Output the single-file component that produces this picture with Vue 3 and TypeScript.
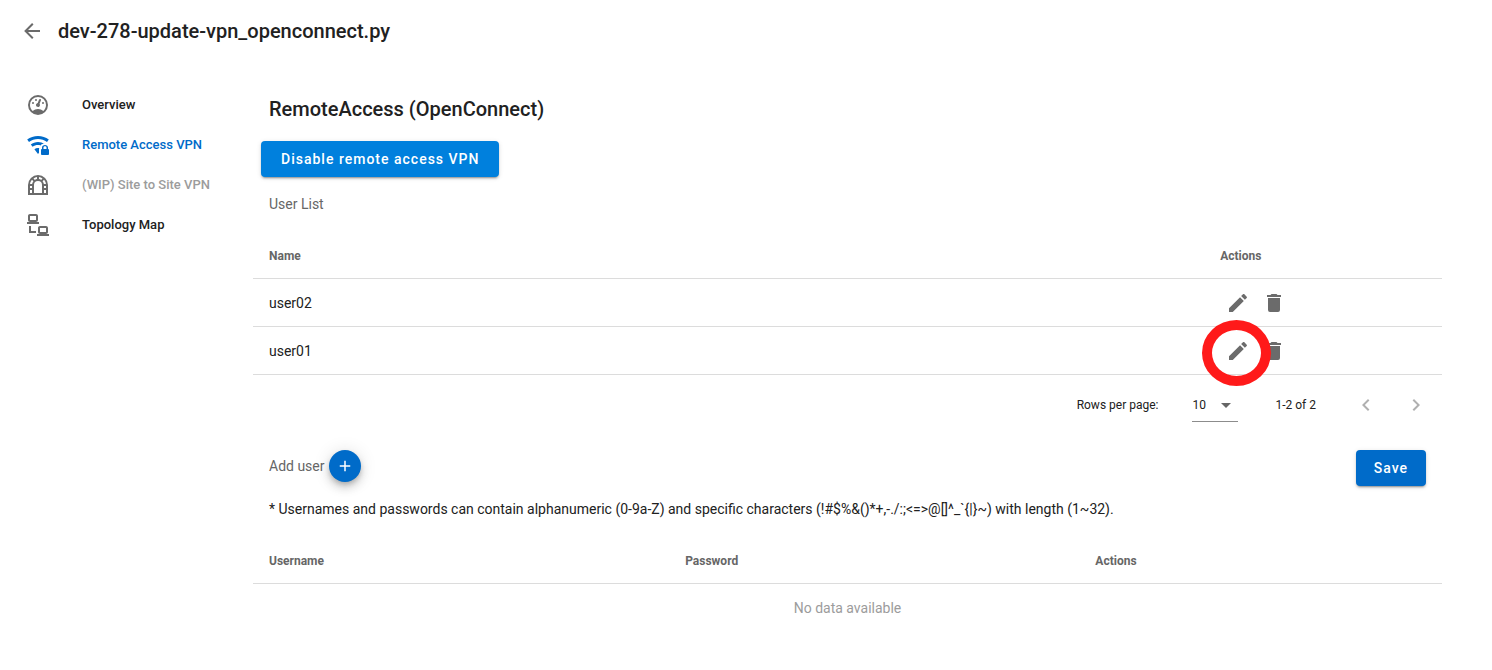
<script setup lang="ts">
import { ref } from 'vue'

interface NavItem {
  label: string
  icon: string
  state: '' | 'active' | 'disabled'
}

const icons: Record<string, string> = {
  back: 'M20,11V13H8L13.5,18.5L12.08,19.92L4.16,12L12.08,4.08L13.5,5.5L8,11H20Z',
  gauge:
    'M12,2A10,10 0 0,0 2,12A10,10 0 0,0 12,22A10,10 0 0,0 22,12A10,10 0 0,0 12,2M12,4A8,8 0 0,1 20,12C20,14.4 19,16.5 17.3,18C15.9,16.7 14,16 12,16C10,16 8.2,16.7 6.7,18C5,16.5 4,14.4 4,12A8,8 0 0,1 12,4M14,5.89C13.62,5.9 13.26,6.15 13.1,6.54L11.81,9.77L11.71,10C11,10.13 10.41,10.6 10.14,11.26C9.73,12.29 10.23,13.45 11.26,13.86C12.29,14.27 13.45,13.77 13.86,12.74C14.12,12.08 14,11.32 13.57,10.76L13.67,10.5L14.96,7.29L14.97,7.26C15.17,6.75 14.92,6.17 14.41,5.96C14.28,5.91 14.15,5.89 14,5.89M10,6A1,1 0 0,0 9,7A1,1 0 0,0 10,8A1,1 0 0,0 11,7A1,1 0 0,0 10,6M7,9A1,1 0 0,0 6,10A1,1 0 0,0 7,11A1,1 0 0,0 8,10A1,1 0 0,0 7,9M17,9A1,1 0 0,0 16,10A1,1 0 0,0 17,11A1,1 0 0,0 18,10A1,1 0 0,0 17,9Z',
  wifi: 'M12,3C7.95,3 4.21,4.34 1.2,6.6L3,9C5.5,7.12 8.62,6 12,6C15.38,6 18.5,7.12 21,9L22.8,6.6C19.79,4.34 16.05,3 12,3M12,9C9.3,9 6.81,9.89 4.8,11.4L6.6,13.8C8.1,12.67 9.97,12 12,12C12.9,12 13.8,12.13 14.6,12.38C15.4,11 16.9,10.1 18.6,10.97C16.6,9.7 14.4,9 12,9M12,15C10.65,15 9.4,15.45 8.4,16.2L12,21L13,19.67V16C13,15.7 13.1,15.4 13.3,15.15C12.9,15.05 12.4,15 12,15M22,16V14.5C22,13.1 20.7,12 19,12C17.3,12 16,13.1 16,14.5V16C15.5,16 15,16.5 15,17V21C15,21.5 15.5,22 16,22H22C22.5,22 23,21.5 23,21V17C23,16.5 22.5,16 22,16M20.5,16H17.5V14.5C17.5,13.7 18.2,13.2 19,13.2C19.8,13.2 20.5,13.7 20.5,14.5Z',
  tunnel:
    'M12,2A10,10 0 0,0 2,12V22H22V12A10,10 0 0,0 12,2M11,4.07V6.1C10.2,6.24 9.5,6.53 8.86,6.93L7.5,5.4C8.5,4.7 9.7,4.2 11,4.07M13,4.07C14.3,4.2 15.5,4.7 16.5,5.4L15.14,6.93C14.5,6.53 13.8,6.24 13,6.1V4.07M6,6.7L7.4,8.2C6.8,8.9 6.36,9.9 6.1,11H4.07C4.2,9.3 4.9,7.9 6,6.7M18,6.7C19.1,7.9 19.8,9.3 19.93,11H17.9C17.64,9.9 17.2,8.9 16.6,8.2L18,6.7M12,8A4,4 0 0,1 16,12V20H8V12A4,4 0 0,1 12,8M4,13H6V15H4V13M18,13H20V15H18V13M4,17H6V20H4V17M18,17H20V20H18V17Z',
  lan: 'M4,1C2.89,1 2,1.89 2,3V7C2,8.11 2.89,9 4,9H1V11H13V9H10C11.11,9 12,8.11 12,7V3C12,1.89 11.11,1 10,1H4M4,3H10V7H4V3M3,13V20H10V18H5V13H3M14,13C12.89,13 12,13.89 12,15V19C12,20.11 12.89,21 14,21H11V23H23V21H20C21.11,21 22,20.11 22,19V15C22,13.89 21.11,13 20,13H14M14,15H20V19H14V15Z',
  pencil:
    'M20.71,7.04C21.1,6.65 21.1,6 20.71,5.63L18.37,3.29C18,2.9 17.35,2.9 16.96,3.29L15.12,5.12L18.87,8.87M3,17.25V21H6.75L17.81,9.93L14.06,6.18L3,17.25Z',
  trash: 'M19,4H15.5L14.5,3H9.5L8.5,4H5V6H19M6,19A2,2 0 0,0 8,21H16A2,2 0 0,0 18,19V7H6V19Z',
  left: 'M15.41,16.58L10.83,12L15.41,7.41L14,6L8,12L14,18L15.41,16.58Z',
  right: 'M8.59,16.58L13.17,12L8.59,7.41L10,6L16,12L10,18L8.59,16.58Z',
  down: 'M7,10L12,15L17,10H7Z',
  plus: 'M19,13H13V19H11V13H5V11H11V5H13V11H19V13Z',
}

const nav: NavItem[] = [
  { label: 'Overview', icon: 'gauge', state: '' },
  { label: 'Remote Access VPN', icon: 'wifi', state: 'active' },
  { label: '(WIP) Site to Site VPN', icon: 'tunnel', state: 'disabled' },
  { label: 'Topology Map', icon: 'lan', state: '' },
]

const users = ref<string[]>(['user02', 'user01'])
const marked = 'user01'
const perPage = ref(10)
</script>

<template>
  <div class="page">
    <header class="top">
      <button class="icon-btn" type="button" aria-label="Back">
        <svg class="icon" viewBox="0 0 24 24"><path :d="icons.back" /></svg>
      </button>
      <h1>dev-278-update-vpn_openconnect.py</h1>
    </header>

    <div class="body">
      <nav class="side">
        <a v-for="item in nav" :key="item.label" href="#" class="nav-item" :class="item.state">
          <svg class="icon" viewBox="0 0 24 24"><path fill-rule="evenodd" :d="icons[item.icon]" /></svg>
          <span>{{ item.label }}</span>
        </a>
      </nav>

      <main class="main">
        <h2>RemoteAccess (OpenConnect)</h2>
        <button class="btn disable" type="button">Disable remote access VPN</button>
        <p class="sub">User List</p>

        <table class="users">
          <thead>
            <tr><th class="c-name">Name</th><th>Actions</th></tr>
          </thead>
          <tbody>
            <tr v-for="user in users" :key="user">
              <td>{{ user }}</td>
              <td>
                <div class="actions">
                  <button class="icon-btn edit" type="button" :aria-label="`Edit ${user}`">
                    <svg class="icon" viewBox="0 0 24 24"><path :d="icons.pencil" /></svg>
                    <span v-if="user === marked" class="ring"></span>
                  </button>
                  <button class="icon-btn" type="button" :aria-label="`Delete ${user}`">
                    <svg class="icon" viewBox="0 0 24 24"><path :d="icons.trash" /></svg>
                  </button>
                </div>
              </td>
            </tr>
          </tbody>
        </table>

        <div class="pager">
          <label for="per-page">Rows per page:</label>
          <div class="select">
            <select id="per-page" v-model="perPage">
              <option :value="10">10</option>
              <option :value="25">25</option>
            </select>
            <svg class="icon caret" viewBox="0 0 24 24"><path :d="icons.down" /></svg>
          </div>
          <span>1-2 of 2</span>
          <button class="icon-btn prev" type="button" disabled aria-label="Previous page">
            <svg class="icon" viewBox="0 0 24 24"><path :d="icons.left" /></svg>
          </button>
          <button class="icon-btn next" type="button" disabled aria-label="Next page">
            <svg class="icon" viewBox="0 0 24 24"><path :d="icons.right" /></svg>
          </button>
        </div>

        <div class="add">
          <span id="add-label" class="add-label">Add user</span>
          <button class="fab" type="button" aria-labelledby="add-label">
            <svg viewBox="0 0 24 24"><path :d="icons.plus" /></svg>
          </button>
          <button class="btn save" type="button">Save</button>
        </div>

        <p class="note">* Usernames and passwords can contain alphanumeric (0-9a-Z) and specific characters (!#$%&amp;()*+,-./:;&lt;=&gt;@[]^_`{|}~) with length (1~32).</p>

        <table class="new-users">
          <thead>
            <tr><th class="c-user">Username</th><th class="c-pass">Password</th><th>Actions</th></tr>
          </thead>
          <tbody>
            <tr><td colspan="3" class="empty">No data available</td></tr>
          </tbody>
        </table>
      </main>
    </div>
  </div>
</template>

<style>
body {
  margin: 0;
  background: #fff;
}
</style>

<style scoped>
.page {
  font-family: Roboto, sans-serif;
  font-size: 14px;
  line-height: 20px;
  color: #212121;
}
button {
  font: inherit;
  border: 0;
  padding: 0;
  cursor: pointer;
}
.icon {
  display: block;
  flex: none;
  width: 24px;
  height: 24px;
  fill: currentColor;
}
.icon-btn {
  display: block;
  background: none;
  color: #6b6b6b;
}
.icon-btn:disabled {
  color: #b0b0b0;
}
.top {
  display: flex;
  align-items: center;
  gap: 14px;
  height: 62px;
  padding: 0 20px;
}
h1,
h2 {
  margin: 0;
  font-size: 20px;
  font-weight: 500;
  line-height: 32px;
}
.body {
  display: flex;
  padding: 23px 50px 0 10px;
}
.side {
  flex: none;
  width: 243px;
}
.nav-item {
  display: flex;
  align-items: center;
  gap: 32px;
  height: 40px;
  padding-left: 16px;
  font-size: 13px;
  font-weight: 500;
  color: #212121;
  text-decoration: none;
}
.nav-item .icon {
  color: #6b6b6b;
}
.nav-item.active,
.nav-item.active .icon {
  color: #006bc9;
}
.nav-item.disabled {
  color: #9c9c9c;
}
.main {
  flex: 1;
  min-width: 0;
}
h2 {
  padding: 8px 16px 0;
}
.btn {
  height: 36px;
  border-radius: 4px;
  background: #006bc9;
  color: #fff;
  font-weight: 500;
  letter-spacing: 1px;
  padding: 0 18px;
  box-shadow: 0 3px 1px -2px rgba(0, 0, 0, 0.2), 0 2px 2px rgba(0, 0, 0, 0.14), 0 1px 5px rgba(0, 0, 0, 0.12);
}
.disable {
  display: block;
  margin: 16px 8px 0;
  padding: 0 20px;
  background: #0080dd;
}
.sub {
  margin: 17px 16px 0;
  color: #666;
}
table {
  width: 100%;
  border-spacing: 0;
  table-layout: fixed;
}
th,
td {
  box-sizing: border-box;
  height: 48px;
  padding: 0 16px;
}
th {
  padding-top: 2px;
  text-align: left;
  font-size: 12px;
  font-weight: 700;
  color: #666;
  border-bottom: 1px solid #dcdcdc;
}
.users {
  margin-top: 17px;
}
.users td {
  border-bottom: 1px solid #dcdcdc;
}
.c-name {
  width: 80%;
}
.actions {
  display: flex;
  gap: 12px;
  padding-left: 6px;
}
.edit {
  position: relative;
}
.ring {
  position: absolute;
  top: -19px;
  left: -24px;
  width: 49px;
  height: 46px;
  border: 10px solid #ff1a1a;
  border-radius: 50%;
}
.pager {
  display: flex;
  align-items: center;
  justify-content: flex-end;
  height: 60px;
  padding-right: 14px;
  font-size: 12px;
}
.select {
  position: relative;
  margin: 0 37px 0 34px;
  border-bottom: 1px solid #8c8c8c;
}
select {
  display: block;
  appearance: none;
  width: 46px;
  height: 32px;
  border: 0;
  padding: 0;
  background: none;
  font: inherit;
  color: inherit;
}
.caret {
  position: absolute;
  top: 4px;
  right: 0;
  color: #666;
  pointer-events: none;
}
.prev {
  margin-left: 38px;
}
.next {
  margin-left: 26px;
}
.add {
  display: flex;
  align-items: flex-start;
  margin: 15px 16px 0;
  color: #666;
}
.add-label {
  line-height: 32px;
}
.fab {
  display: flex;
  align-items: center;
  justify-content: center;
  width: 32px;
  height: 32px;
  margin-left: 4px;
  border-radius: 50%;
  background: #006bc9;
  box-shadow: 0 3px 5px -1px rgba(0, 0, 0, 0.2), 0 6px 10px rgba(0, 0, 0, 0.14), 0 1px 18px rgba(0, 0, 0, 0.12);
}
.fab svg {
  width: 18px;
  height: 18px;
  fill: #fff;
}
.save {
  margin-left: auto;
}
.note {
  margin: 13px 16px 0;
}
.new-users {
  margin-top: 17px;
}
.c-user {
  width: 35%;
}
.c-pass {
  width: 34.5%;
}
.empty {
  text-align: center;
  color: #9c9c9c;
}
</style>
